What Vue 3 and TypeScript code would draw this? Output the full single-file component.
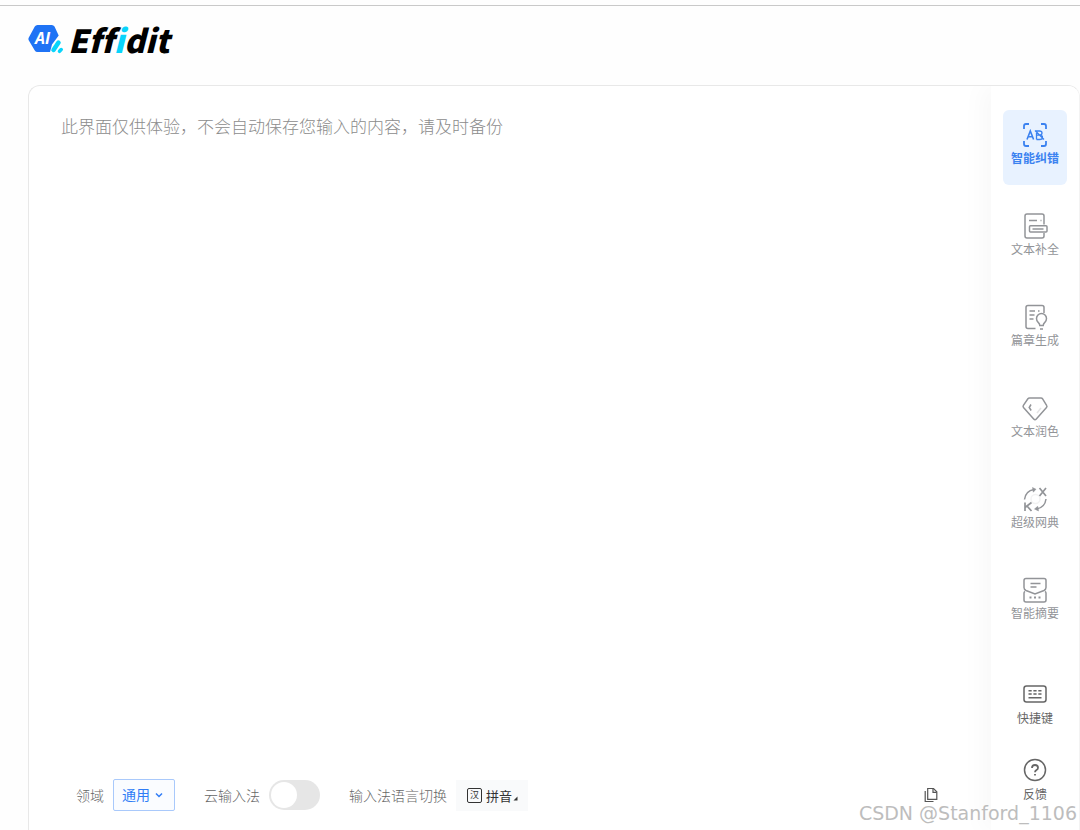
<script setup lang="ts">
import { ref } from 'vue'

type ToolKey = 'correct' | 'complete' | 'generate' | 'polish' | 'dictionary' | 'summary'

interface Tool {
  key: ToolKey
  label: string
}

const tools: Tool[] = [
  { key: 'correct', label: '智能纠错' },
  { key: 'complete', label: '文本补全' },
  { key: 'generate', label: '篇章生成' },
  { key: 'polish', label: '文本润色' },
  { key: 'dictionary', label: '超级网典' },
  { key: 'summary', label: '智能摘要' },
]

const active = ref<ToolKey>('correct')
const content = ref('')
const domain = ref('通用')
const cloudInput = ref(false)
</script>

<template>
  <div class="page">
    <header class="header">
      <a class="brand" href="#" aria-label="Effidit">
        <svg class="brand-mark" viewBox="0 0 36 30" aria-hidden="true">
          <path d="M9.5 1h14.3q1.8 0 2.7 1.600l4.200 9L24 20.500l-2 7.500H9.500q-1.800 0-2.700-1.500L.7 16.200q-.7-1.200 0-2.400L6.800 2.500Q7.700 1 9.500 1Z" fill="#1f73f5" />
          <path d="M30.500 18.500 25.500 26" stroke="#08d4fb" stroke-width="4.500" stroke-linecap="round" />
          <path d="M31.500 27.300 33.200 25.600" stroke="#08d4fb" stroke-width="3.600" stroke-linecap="round" />
          <text x="7" y="20" class="mark-text">AI</text>
        </svg>
        <span class="brand-name">Eff<span class="brand-accent">i</span>dit</span>
      </a>
    </header>

    <main class="workspace">
      <section class="editor">
        <textarea
          v-model="content"
          class="editor-text"
          aria-label="编辑内容"
          placeholder="此界面仅供体验，不会自动保存您输入的内容，请及时备份"
        ></textarea>
        <div class="toolbar">
          <label class="field domain">
            <span>领域</span>
            <span class="select-box">
              <select v-model="domain">
                <option>通用</option>
              </select>
              <svg class="chevron" viewBox="0 0 8 6" aria-hidden="true"><path d="m1 1.500 3 3 3-3" /></svg>
            </span>
          </label>
          <label class="field cloud">
            <span>云输入法</span>
            <input v-model="cloudInput" class="switch" type="checkbox" role="switch" />
          </label>
          <div class="field">
            <span id="ime-label">输入法语言切换</span>
            <button class="ime" type="button" aria-describedby="ime-label">
              <span class="ime-badge">汉</span>
              <span>拼音</span>
              <svg class="ime-corner" viewBox="0 0 5 5" aria-hidden="true"><path d="M4.500.5v4h-4Z" /></svg>
            </button>
          </div>
          <button class="copy" type="button" aria-label="复制">
            <svg viewBox="0 0 14 16" aria-hidden="true">
              <path d="M3.700 1.500h5.800l3.300 3.300v7.500H3.700Z" />
              <path d="M9 1.500v3.800h3.800M1.200 4v10.500h8.300" />
            </svg>
          </button>
        </div>
      </section>

      <aside class="sidebar">
        <nav class="tools">
          <button
            v-for="tool in tools"
            :key="tool.key"
            type="button"
            class="tool"
            :class="{ active: active === tool.key }"
            @click="active = tool.key"
          >
            <svg class="tool-icon" viewBox="0 0 28 28" aria-hidden="true">
              <g v-if="tool.key === 'correct'">
                <path d="M3 8V5q0-2 2-2h3M20 3h3q2 0 2 2v3M25 20v3q0 2-2 2h-3M8 25H5q-2 0-2-2v-3" stroke-width="1.800" />
                <path d="m6 18.500 3.300-8.500 3.300 8.500M7.200 15.800h4.300" stroke-width="1.600" />
                <path d="M15.500 18.500V10h3q2.500 0 2.500 2t-2.500 2.100h-3M18.500 14.100q3 0 3 2.200t-3 2.200h-3M14 9.500l9 9" stroke-width="1.300" />
              </g>
              <g v-else-if="tool.key === 'complete'">
                <path d="M23 12.500V4q0-2-2-2H6Q4 2 4 4v20q0 2 2 2h15q2 0 2-2v-3" />
                <path d="M8 8.500h8M19.500 8.500h1" />
                <rect x="8.500" y="13.700" width="17.500" height="6.300" rx="1" />
                <path d="M11.500 16.900h11" />
              </g>
              <g v-else-if="tool.key === 'generate'">
                <path d="M23 10V4.500q0-2-2-2H7q-2 0-2 2v19q0 2 2 2h7.500" />
                <path d="M8.500 8h5.500M17 8h1.500M8.500 12h5M8.500 16h4" />
                <path d="M18.800 22.500q0-1.800-1.800-3.400a5 5 0 1 1 7 0q-1.800 1.600-1.800 3.400ZM19 26h3" />
              </g>
              <g v-else-if="tool.key === 'polish'">
                <path d="M8.500 4h11.500q1 0 1.600.8l4 6.500q.8 1.200-.1 2.200l-10.200 11.500q-1.300 1.500-2.600 0L2.500 13.500q-.8-1-.1-2.200l4.500-6.500q.6-.8 1.600-.8Z" />
                <path d="m10 10.500-1.800 3 2 3" />
                <path d="m20 14-4 5" opacity=".25" />
              </g>
              <g v-else-if="tool.key === 'dictionary'">
                <path d="M3.500 14.500Q4.500 6 13 4.500M25 14q-1 8.500-9.500 10" />
                <path d="m11.500 2.500 3.500 1.700-2.700 3ZM17.500 26l-4-2 3.200-2.700Z" fill="currentColor" stroke-width=".5" />
                <path d="m18.500 3 6.500 8M25 3l-6.500 8M4 17.500V26M10.500 17.500 4 22.500M6 21l4.500 5" stroke-width="1.700" />
                <circle cx="14.500" cy="14" r="4.500" opacity=".12" />
              </g>
              <g v-else>
                <path d="M5 14.500Q3 13.500 3 11.500v-7q0-2 2-2h18q2 0 2 2v7q0 2-2 3L14 18Z" />
                <path d="M9.500 7.500h10M9.500 11h6M4 15.500q-1 .5-1 1.500v7q0 2 2 2h18q2 0 2-2v-7q0-1-1-1.500" />
                <path d="M8.500 21.500h2M13 21.500h2M17.500 21.500h2" stroke-width="2" />
              </g>
            </svg>
            <span>{{ tool.label }}</span>
          </button>
        </nav>
        <div class="helpers">
          <button type="button" class="helper">
            <svg viewBox="0 0 28 28" aria-hidden="true">
              <rect x="3" y="6" width="22" height="16" rx="2.500" />
              <path d="M7.500 10.800h3.200M12.400 10.800h3.200M17.300 10.800h3.200M7.500 14h3.200M12.400 14h3.200M17.300 14h3.200M7.500 17.700h13" />
            </svg>
            <span>快捷键</span>
          </button>
          <button type="button" class="helper">
            <svg viewBox="0 0 28 28" aria-hidden="true">
              <circle cx="14" cy="14" r="10.500" />
              <path d="M11 12q0-3 3-3t3 2.700q0 1.500-1.500 2.400T14 16.300M14 18v1.500" stroke-width="1.800" />
            </svg>
            <span>反馈</span>
          </button>
        </div>
      </aside>
    </main>
    <span class="watermark">CSDN @Stanford_1106</span>
  </div>
</template>

<style>
body {
  margin: 0;
  background: #fff;
}
</style>

<style scoped>
.page {
  position: relative;
  display: flex;
  flex-direction: column;
  box-sizing: border-box;
  min-height: 100vh;
  padding-top: 5px;
  background: #fefefe;
  color: #666;
  font-family: "Liberation Sans", "Noto Sans CJK SC", sans-serif;
  font-size: 14px;
  overflow: hidden;
}
.page * {
  box-sizing: border-box;
}
button,
select,
textarea {
  margin: 0;
  padding: 0;
  border: 0;
  background: none;
  color: inherit;
  font: inherit;
}
svg {
  fill: none;
  stroke: currentColor;
  stroke-width: 1.5;
}
.header {
  display: flex;
  align-items: center;
  height: 80px;
  padding: 0 28px 14px;
  border-top: 1px solid #c9c9c9;
}
.brand {
  display: flex;
  align-items: center;
  gap: 4px;
  color: #000;
  text-decoration: none;
}
.brand-mark {
  width: 36px;
  height: 30px;
  stroke: none;
}
.mark-text {
  fill: #fff;
  font: italic 700 16px "Open Sans", sans-serif;
}
.brand-name {
  font: italic 900 32px/38px "Noto Sans CJK SC", sans-serif;
  font-variant-ligatures: none;
}
.brand-accent {
  color: #08d4fb;
}
.workspace {
  display: flex;
  flex: 1;
  margin-left: 28px;
  border: 1px solid #e8e8e8;
  border-right-color: #f3f3f3;
  border-bottom: 0;
  border-radius: 12px 12px 0 0;
  background: #fff;
  overflow: hidden;
}
.editor {
  display: flex;
  flex: 1;
  flex-direction: column;
  min-width: 0;
}
.editor-text {
  flex: 1;
  padding: 29px 32px;
  outline: none;
  resize: none;
  font-size: 17px;
  font-weight: 300;
  line-height: 25px;
}
.editor-text::placeholder {
  color: #8c8c8c;
  opacity: 1;
}
.toolbar {
  display: flex;
  align-items: center;
  height: 32px;
  margin: 0 53px 19px 47px;
  font-weight: 300;
}
.field {
  display: flex;
  align-items: center;
  gap: 9px;
  white-space: nowrap;
}
.domain {
  margin-right: 29px;
}
.cloud {
  margin-right: 29px;
}
.select-box {
  display: grid;
  align-items: center;
  width: 62px;
  height: 32px;
  border: 1px solid #a9c9fb;
  border-radius: 2px;
  background: #fafcff;
  color: #2f7cf6;
}
.select-box select {
  grid-area: 1 / 1;
  width: 100%;
  height: 100%;
  padding: 0 8px;
  appearance: none;
  outline: none;
  font-weight: 400;
}
.chevron {
  grid-area: 1 / 1;
  justify-self: end;
  width: 8px;
  height: 6px;
  margin-right: 11px;
  pointer-events: none;
}
.switch {
  display: flex;
  align-items: center;
  width: 51px;
  height: 30px;
  margin: 0;
  padding: 2px;
  appearance: none;
  border-radius: 15px;
  background: #e6e6e6;
}
.switch::before {
  width: 26px;
  height: 26px;
  border-radius: 50%;
  background: #fff;
  content: "";
}
.switch:checked {
  justify-content: flex-end;
  background: #2f7cf6;
}
.ime {
  display: flex;
  align-items: center;
  height: 31px;
  padding: 0 10px 0 11px;
  background: #f9fafb;
  color: #333;
  font-size: 13px;
  font-weight: 400;
}
.ime-badge {
  width: 15px;
  height: 15px;
  margin-right: 4px;
  border: 1px solid #333;
  border-radius: 2px;
  font-size: 9px;
  line-height: 13px;
  text-align: center;
}
.ime-corner {
  width: 5px;
  height: 5px;
  margin: 6px 0 0 1px;
  fill: #333;
  stroke: none;
}
.copy {
  width: 14px;
  height: 16px;
  margin-left: auto;
  color: #555;
}
.copy svg {
  display: block;
  width: 14px;
  height: 16px;
  stroke-width: 1.2;
}
.sidebar {
  display: flex;
  flex: none;
  flex-direction: column;
  justify-content: space-between;
  width: 88px;
  padding: 24px 12px 25px;
  background: #fff;
  box-shadow: -8px 0 24px rgba(0, 0, 0, 0.03);
}
.tools,
.helpers {
  display: flex;
  flex-direction: column;
  gap: 16px;
}
.tool {
  display: flex;
  flex-direction: column;
  align-items: center;
  height: 75px;
  padding-top: 11px;
  border-radius: 6px;
  color: #929498;
  font-size: 12px;
  line-height: 18px;
  white-space: nowrap;
}
.tool-icon {
  width: 28px;
  height: 28px;
  margin-bottom: 1px;
}
.tool.active {
  background: #e8f2ff;
  color: #3b82f0;
  font-weight: 700;
}
.helpers {
  gap: 27px;
}
.helper {
  display: flex;
  flex-direction: column;
  align-items: center;
  gap: 1px;
  color: #666;
  font-size: 12px;
  line-height: 20px;
}
.helper svg {
  width: 28px;
  height: 28px;
}
.watermark {
  position: absolute;
  right: 3px;
  bottom: 5px;
  color: #bdbdbd;
  font-family: "DejaVu Sans", sans-serif;
  font-size: 19px;
  line-height: 24px;
  text-shadow: 1px 1px 0 #fff;
  pointer-events: none;
}
</style>
